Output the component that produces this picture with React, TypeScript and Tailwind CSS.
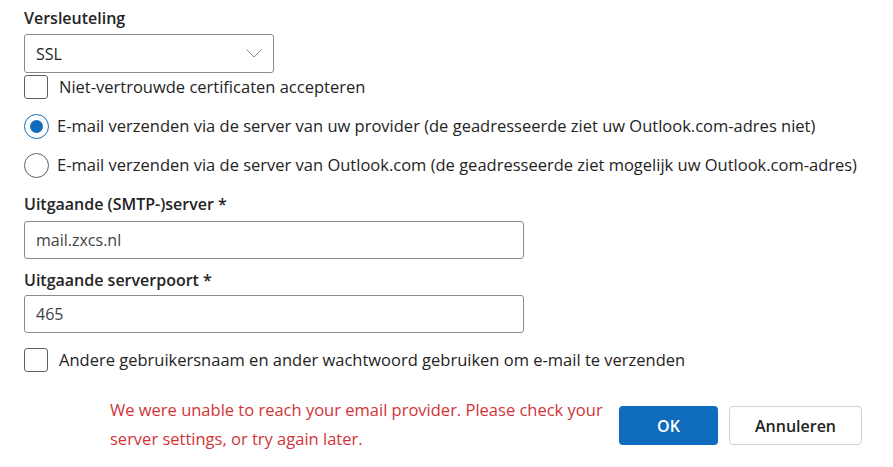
import { ReactNode } from "react";

const font = { fontFamily: '"Open Sans", "Noto Sans", sans-serif' };

function Checkbox({ label }: { label: string }) {
  return (
    <div className="flex items-center h-[24px]">
      <span className="w-[24px] h-[24px] border border-[#616161] rounded-[3px] bg-white shrink-0" />
      <span className="ml-[11px] text-[16.5px] text-[#242424] leading-[24px]">{label}</span>
    </div>
  );
}

function Radio({ checked, label }: { checked?: boolean; label: string }) {
  return (
    <div className="flex items-center h-[24px]">
      <span
        className={
          checked
            ? "w-[25px] h-[25px] rounded-full border border-[#0f6cbd] flex items-center justify-center shrink-0"
            : "w-[25px] h-[25px] rounded-full border border-[#616161] shrink-0"
        }
      >
        {checked && <span className="w-[13px] h-[13px] rounded-full bg-[#0f6cbd]" />}
      </span>
      <span className="ml-[8px] text-[16.5px] text-[#242424] leading-[24px]">{label}</span>
    </div>
  );
}

function Label({ children }: { children: ReactNode }) {
  return <div className="h-[24px] leading-[24px] text-[16px] font-semibold text-[#242424]">{children}</div>;
}

export default function App() {
  return (
    <div className="w-[893px] h-[467px] bg-white pt-[6px] pl-[24px] flex flex-col" style={font}>
      <Label>Versleuteling</Label>
      {/* select */}
      <div className="mt-[4px] w-[250px] h-[39px] border border-[#8a8a8a] rounded-[3px] flex items-center justify-between px-[11px]">
        <span className="text-[16px] text-[#242424]">SSL</span>
        <svg width="16" height="9" viewBox="0 0 16 9">
          <path d="M0.5 0.5 L8 8 L15.5 0.5" fill="none" stroke="#8a8a8a" strokeWidth="1" />
        </svg>
      </div>
      <div className="mt-[2px]">
        <Checkbox label="Niet-vertrouwde certificaten accepteren" />
      </div>
      <div className="mt-[15px]">
        <Radio checked label="E-mail verzenden via de server van uw provider (de geadresseerde ziet uw Outlook.com-adres niet)" />
      </div>
      <div className="mt-[15px]">
        <Radio label="E-mail verzenden via de server van Outlook.com (de geadresseerde ziet mogelijk uw Outlook.com-adres)" />
      </div>
      <div className="mt-[15px]">
        <Label>Uitgaande (SMTP-)server *</Label>
      </div>
      <div className="mt-[5px] w-[500px] h-[38px] border border-[#8a8a8a] rounded-[3px] flex items-center px-[11px] text-[16px] text-[#424242]">
        mail.zxcs.nl
      </div>
      <div className="mt-[9px]">
        <Label>Uitgaande serverpoort *</Label>
      </div>
      <div className="mt-[3px] w-[500px] h-[38px] border border-[#8a8a8a] rounded-[3px] flex items-center px-[11px] text-[16px] text-[#424242]">
        465
      </div>
      <div className="mt-[15px]">
        <Checkbox label="Andere gebruikersnaam en ander wachtwoord gebruiken om e-mail te verzenden" />
      </div>
      <div className="mt-[23px] flex items-start">
        <div className="ml-[86px] w-[495px] text-[16.5px] leading-[29px] text-[#d13438] whitespace-nowrap">
          We were unable to reach your email provider. Please check your
          <br />
          server settings, or try again later.
        </div>
        <button className="mt-[11px] ml-[14px] w-[99px] h-[39px] rounded-[4px] bg-[#0f6cbd] text-white text-[16px] font-semibold">
          OK
        </button>
        <button className="mt-[11px] ml-[11px] w-[133px] h-[39px] rounded-[4px] border border-[#d1d1d1] bg-white text-[#242424] text-[16px] font-semibold">
          Annuleren
        </button>
      </div>
    </div>
  );
}
